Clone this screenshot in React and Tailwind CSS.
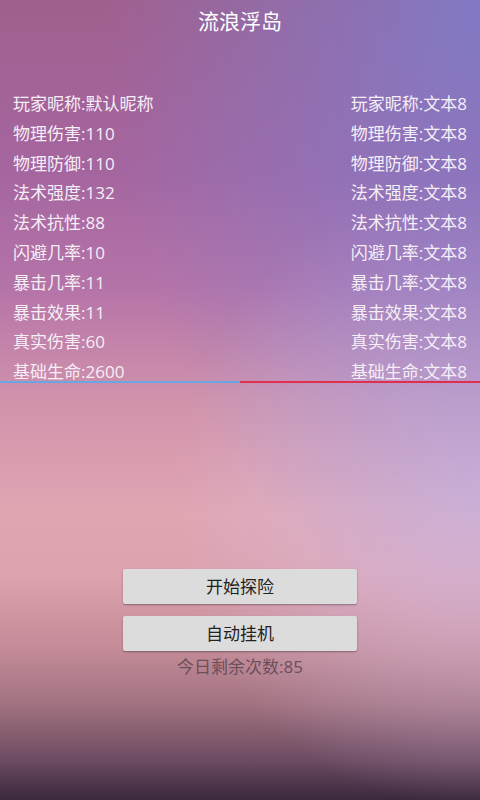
import React from "react";

const leftStats = [
  "玩家昵称:默认昵称",
  "物理伤害:110",
  "物理防御:110",
  "法术强度:132",
  "法术抗性:88",
  "闪避几率:10",
  "暴击几率:11",
  "暴击效果:11",
  "真实伤害:60",
  "基础生命:2600",
];

const rightStats = [
  "玩家昵称:文本8",
  "物理伤害:文本8",
  "物理防御:文本8",
  "法术强度:文本8",
  "法术抗性:文本8",
  "闪避几率:文本8",
  "暴击几率:文本8",
  "暴击效果:文本8",
  "真实伤害:文本8",
  "基础生命:文本8",
];

const App = () => {
  return (
    <div className="w-[480px] h-[800px] flex flex-col font-['Open_Sans','Noto_Sans_CJK_SC',sans-serif] bg-[radial-gradient(ellipse_at_100%_0%,rgba(120,130,215,0.75),transparent_55%),radial-gradient(ellipse_at_100%_62%,rgba(215,190,230,0.7),transparent_45%),linear-gradient(to_bottom,#a0608e_0%,#a566a0_22%,#b574a8_36%,#d092ab_50%,#e0a6b2_64%,#dca2ae_72%,#c48c98_81%,#a27280_88%,#6c4c62_95%,#3a283c_100%)]">
      <div className="h-[44px] flex items-center justify-center text-white text-[21px]">
        流浪浮岛
      </div>

      <div className="mt-[51px] flex justify-between px-[13px] text-[17px] leading-[18px] text-[#f6eef6]">
        <div className="flex flex-col gap-[11.8px]">
          {leftStats.map((s) => (
            <span key={s}>{s}</span>
          ))}
        </div>
        <div className="flex flex-col gap-[11.8px] items-end">
          {rightStats.map((s) => (
            <span key={s}>{s}</span>
          ))}
        </div>
      </div>

      <div className="flex h-[2px]">
        <div className="flex-1 bg-[#6aa6e2]" />
        <div className="flex-1 bg-[#e0304e]" />
      </div>

      <div className="mt-[186px] flex flex-col items-center">
        <button className="w-[234px] h-[35px] bg-[#dcdcdc] rounded-[2px] shadow-[0_1px_2px_rgba(0,0,0,0.35)] text-[17px] text-[#222]">
          开始探险
        </button>
        <button className="mt-[12px] w-[234px] h-[35px] bg-[#dcdcdc] rounded-[2px] shadow-[0_1px_2px_rgba(0,0,0,0.35)] text-[17px] text-[#222]">
          自动挂机
        </button>
        <span className="mt-[7px] text-[17px] leading-[18px] text-[#6a505c]">
          今日剩余次数:85
        </span>
      </div>
    </div>
  );
};

export default App;
